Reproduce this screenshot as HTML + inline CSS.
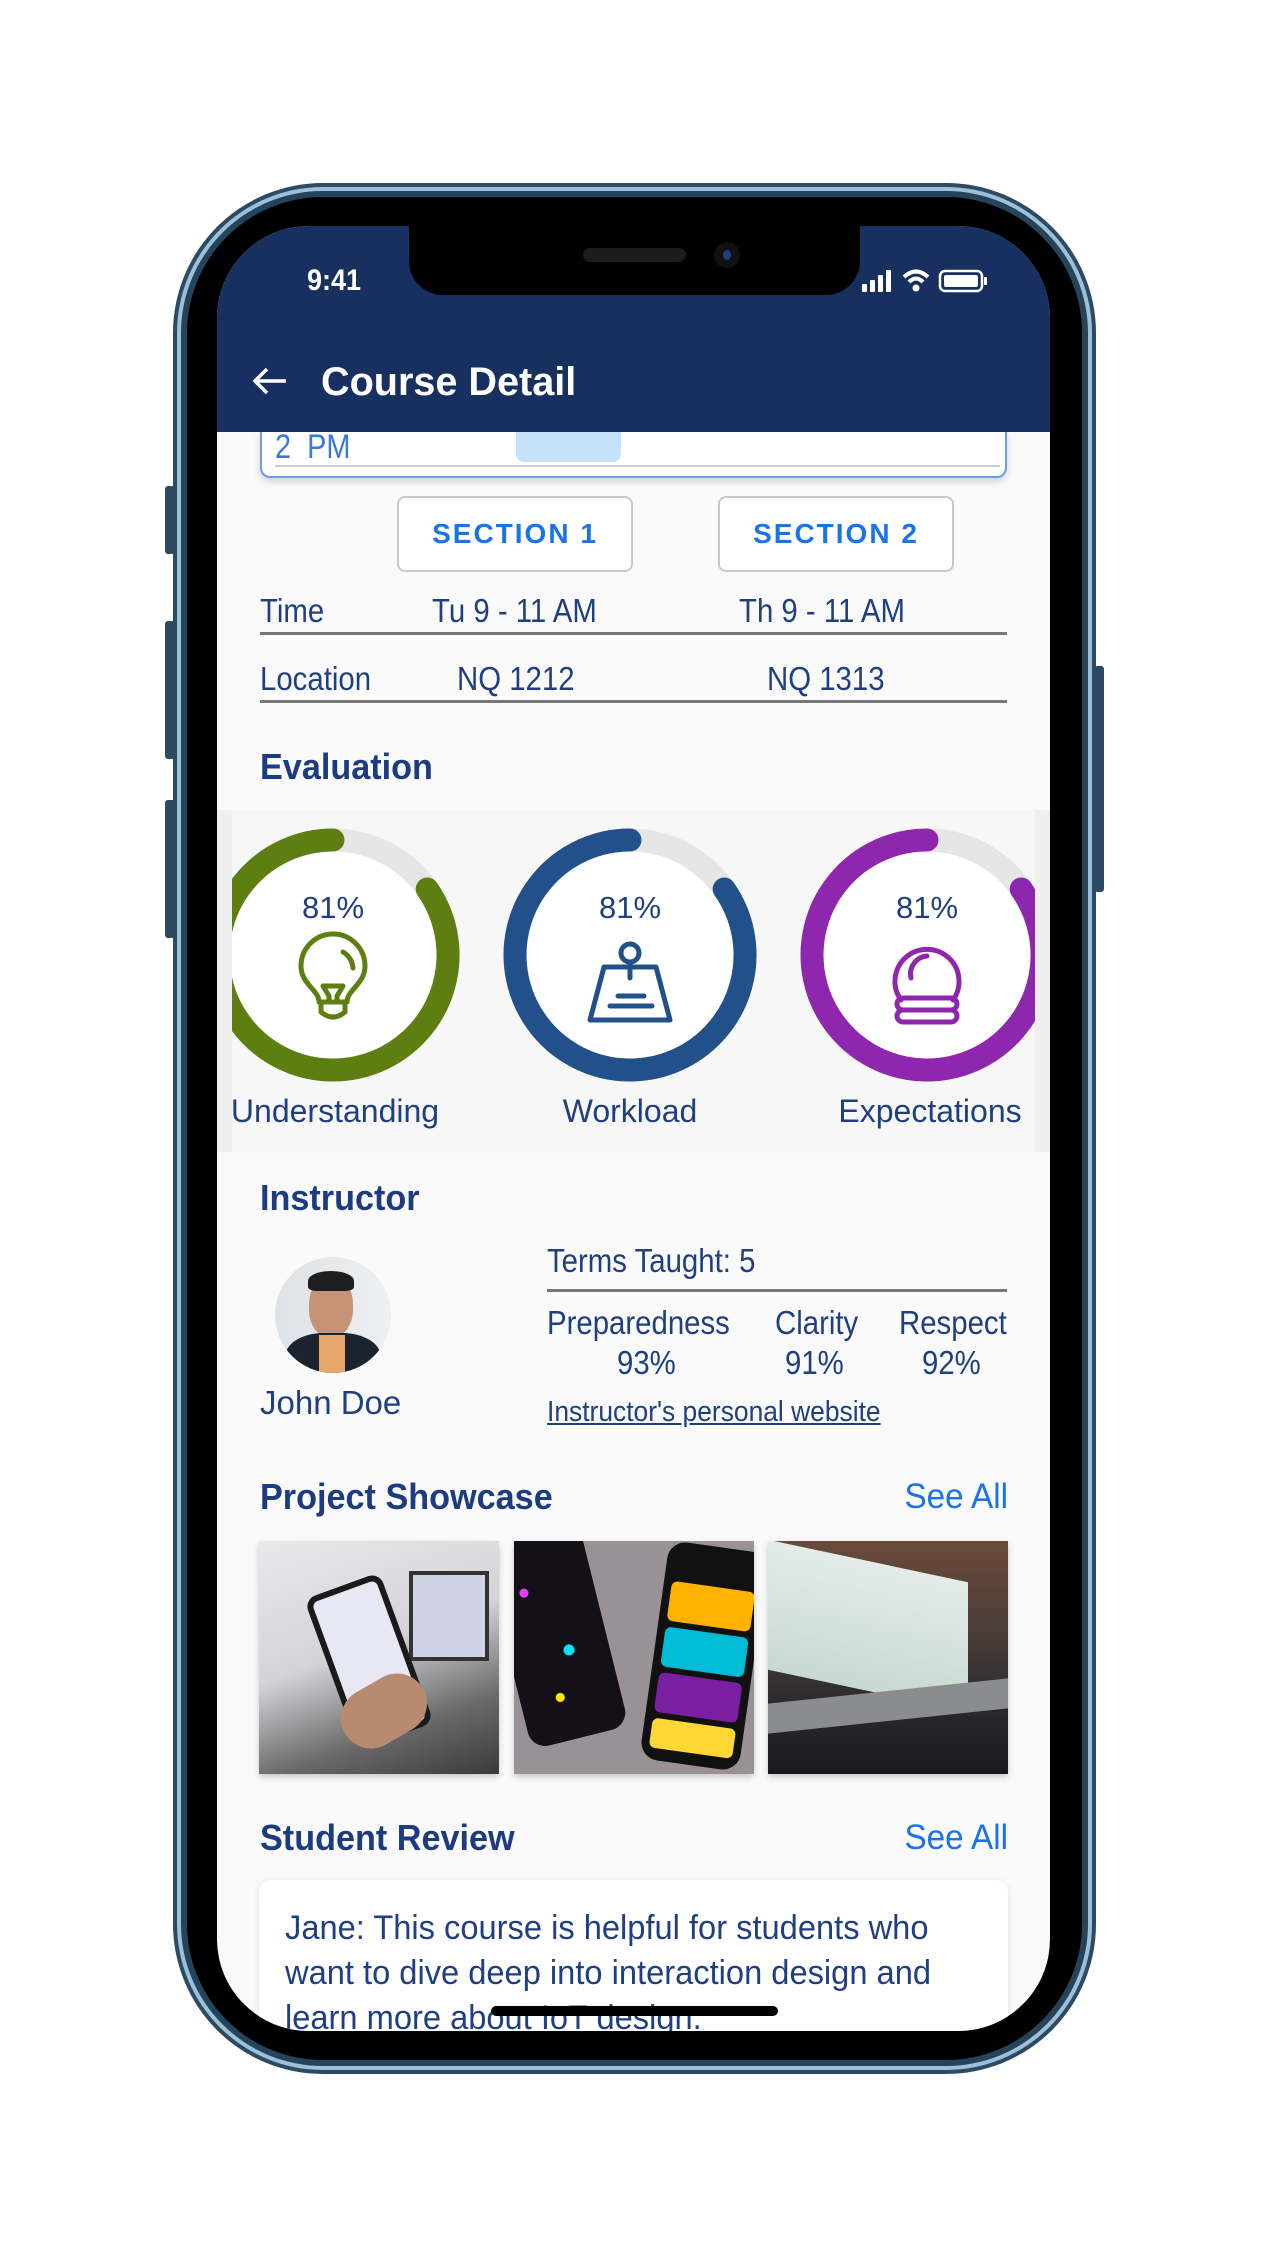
<!DOCTYPE html>
<html><head><meta charset="utf-8"><style>
*{margin:0;padding:0;box-sizing:border-box}
body{width:1266px;height:2250px;background:#fff;position:relative;overflow:hidden;font-family:"Liberation Sans",sans-serif}
.abs{position:absolute}
.n{color:#1f3f80;font-size:33px;white-space:nowrap;transform:scaleX(0.89);transform-origin:0 0;line-height:38px}
.h{font-weight:bold;color:#1c3b80;font-size:36px;white-space:nowrap;transform:scaleX(0.95);transform-origin:0 0;line-height:40px}
.see{color:#1a73e8;font-size:35px;white-space:nowrap;transform:scaleX(0.95);transform-origin:100% 0;line-height:40px;text-align:right}
.btn{border:2px solid #c8c8c8;border-radius:8px;background:#fff;color:#1a73e8;font-weight:bold;font-size:28px;letter-spacing:2px;text-align:center;line-height:72px}
</style></head><body>
<div class="abs" style="left:165px;top:486px;width:10px;height:68px;background:#2d4a63;border-radius:3px"></div>
<div class="abs" style="left:165px;top:621px;width:10px;height:138px;background:#2d4a63;border-radius:3px"></div>
<div class="abs" style="left:165px;top:800px;width:10px;height:138px;background:#2d4a63;border-radius:3px"></div>
<div class="abs" style="left:1094px;top:666px;width:10px;height:226px;background:#2d4a63;border-radius:3px"></div>
<div class="abs" style="left:173px;top:183px;width:923px;height:1891px;border-radius:150px;background:#2c4a63;"></div>
<div class="abs" style="left:177px;top:187px;width:915px;height:1883px;border-radius:146px;background:#9cc0d8;"></div>
<div class="abs" style="left:181px;top:191px;width:907px;height:1875px;border-radius:142px;background:#25445c;"></div>
<div class="abs" style="left:187px;top:197px;width:895px;height:1863px;border-radius:136px;background:#000;"></div>
<div class="abs" style="left:217px;top:226px;width:833px;height:1805px;border-radius:92px;overflow:hidden;background:#fafafa">
  <div class="abs" style="left:0;top:0;width:833px;height:206px;background:#17305f"></div>
  <div class="abs" style="left:192px;top:0;width:451px;height:69px;background:#000;border-radius:0 0 34px 34px"></div>
  <div class="abs" style="left:366px;top:22px;width:103px;height:14px;background:#1c1c1c;border-radius:7px"></div>
  <div class="abs" style="left:497px;top:16px;width:26px;height:26px;background:#111;border-radius:50%"><div style="margin:8px auto;width:8px;height:10px;border-radius:50%;background:#1f3f80"></div></div>
  <div class="abs" style="left:90px;top:38px;color:#fff;font-size:30px;font-weight:bold;transform:scaleX(0.9);transform-origin:0 0">9:41</div>
  <svg class="abs" style="left:645px;top:40px" width="150" height="30" viewBox="0 0 150 30">
    <rect x="0" y="18" width="5" height="8" rx="1" fill="#fff"/><rect x="8" y="14" width="5" height="12" rx="1" fill="#fff"/><rect x="16" y="9" width="5" height="17" rx="1" fill="#fff"/><rect x="24" y="4" width="5" height="22" rx="1" fill="#fff"/>
    <path d="M42 11 Q54 0 66 11" stroke="#fff" stroke-width="4" fill="none"/><path d="M47 16 Q54 9 61 16" stroke="#fff" stroke-width="4" fill="none"/><circle cx="54" cy="22" r="3.5" fill="#fff"/>
    <rect x="78" y="5" width="42" height="20" rx="5" fill="none" stroke="#fff" stroke-width="2.5"/><rect x="82" y="9" width="34" height="12" rx="2" fill="#fff"/><rect x="122" y="11" width="3" height="8" rx="1" fill="#fff"/>
  </svg>
  <div class="abs" style="left:35px;top:140px;"><svg width="36" height="30" viewBox="0 0 36 30"><path d="M34 15H4M15 3L3 15l12 12" stroke="#fff" stroke-width="3.5" fill="none"/></svg></div>
  <div class="abs" style="left:104px;top:134px;color:#fff;font-size:40px;font-weight:bold;transform:scaleX(0.99);transform-origin:0 0;white-space:nowrap">Course Detail</div>
  <div class="abs" style="left:43px;top:206px;width:747px;height:46px;border:2px solid #6a9cf0;border-top:none;border-radius:0 0 10px 10px;background:#fff;box-shadow:0 4px 8px rgba(0,0,0,.15);overflow:hidden">
    <div class="abs" style="left:254px;top:0;width:105px;height:30px;background:#c6e3fb;border-radius:0 0 8px 8px"></div>
    <div class="abs" style="left:13px;top:-4px;color:#3a78e0;font-size:34px;transform:scaleX(0.85);transform-origin:0 0">2&nbsp;&nbsp;PM</div>
    <div class="abs" style="left:13px;top:33px;width:725px;height:2px;background:#ccc"></div>
  </div>
  <div class="abs btn" style="left:180px;top:270px;width:236px;height:76px">SECTION 1</div>
  <div class="abs btn" style="left:501px;top:270px;width:236px;height:76px">SECTION 2</div>
  <div class="abs n" style="left:43px;top:366px">Time</div>
  <div class="abs n" style="left:215px;top:366px">Tu 9 - 11 AM</div>
  <div class="abs n" style="left:522px;top:366px">Th 9 - 11 AM</div>
  <div class="abs" style="left:43px;top:406px;width:747px;height:3px;background:#777"></div>
  <div class="abs n" style="left:43px;top:434px">Location</div>
  <div class="abs n" style="left:240px;top:434px">NQ 1212</div>
  <div class="abs n" style="left:550px;top:434px">NQ 1313</div>
  <div class="abs" style="left:43px;top:474px;width:747px;height:3px;background:#777"></div>
  <div class="abs h" style="left:43px;top:521px">Evaluation</div>
  <div class="abs" style="left:0;top:584px;width:833px;height:342px;background:#efefef"></div>
  <div class="abs" style="left:15px;top:584px;width:803px;height:342px;overflow:hidden;background:#f7f7f7">
    <svg class="abs" style="left:-15px;top:0" width="833" height="342" viewBox="0 0 833 342">
      <defs><filter id="sh" x="-30%" y="-30%" width="160%" height="160%"><feDropShadow dx="0" dy="4" stdDeviation="7" flood-color="#000" flood-opacity="0.18"/></filter></defs>
      <g stroke-linecap="round" fill="none" stroke-width="23">
        <circle cx="116" cy="145" r="104" fill="#fff" stroke="none" filter="url(#sh)"/>
        <circle cx="116" cy="145" r="115" stroke="#e6e6e6"/>
        <path d="M210.2 79 A115 115 0 1 1 116 30" stroke="#5d7e10"/>
        <circle cx="413" cy="145" r="104" fill="#fff" stroke="none" filter="url(#sh)"/>
        <circle cx="413" cy="145" r="115" stroke="#e6e6e6"/>
        <path d="M507.2 79 A115 115 0 1 1 413 30" stroke="#22508a"/>
        <circle cx="710" cy="145" r="104" fill="#fff" stroke="none" filter="url(#sh)"/>
        <circle cx="710" cy="145" r="115" stroke="#e6e6e6"/>
        <path d="M804.2 79 A115 115 0 1 1 710 30" stroke="#8e27ad"/>
      </g>
      <g transform="translate(74,130)" fill="none" stroke="#5d7e10" stroke-width="5" stroke-linecap="round" stroke-linejoin="round">
        <path d="M28 62 C28 50 10 44 10 26 A32 32 0 0 1 74 26 C74 44 56 50 56 62 Z"/>
        <path d="M52 12 A20 20 0 0 1 62 28"/>
        <path d="M32 46 H52 L46 56 V62 M38 62 V56 L32 46"/>
        <path d="M30 62 H54 V72 Q42 82 30 72 Z"/>
      </g>
      <g transform="translate(371,130)" fill="none" stroke="#22508a" stroke-width="5" stroke-linecap="round" stroke-linejoin="round">
        <circle cx="42" cy="13" r="9"/>
        <path d="M42 22 V38"/>
        <path d="M16 27 H68 L82 80 H2 Z"/>
        <path d="M30 56 H56 M22 66 H64"/>
      </g>
      <g transform="translate(668,132)" fill="none" stroke="#8e27ad" stroke-width="5" stroke-linecap="round" stroke-linejoin="round">
        <path d="M16 58 A32 32 0 1 1 68 58"/>
        <path d="M26 36 A18 18 0 0 1 42 14"/>
        <rect x="12" y="56" width="60" height="12" rx="6"/>
        <rect x="12" y="68" width="60" height="12" rx="6"/>
      </g>
      <text x="116" y="108" text-anchor="middle" font-family="Liberation Sans" font-size="31" fill="#1f3f80">81%</text>
      <text x="413" y="108" text-anchor="middle" font-family="Liberation Sans" font-size="31" fill="#1f3f80">81%</text>
      <text x="710" y="108" text-anchor="middle" font-family="Liberation Sans" font-size="31" fill="#1f3f80">81%</text>
      <text x="118" y="312" text-anchor="middle" font-family="Liberation Sans" font-size="32" fill="#1f3f80">Understanding</text>
      <text x="413" y="312" text-anchor="middle" font-family="Liberation Sans" font-size="32" fill="#1f3f80">Workload</text>
      <text x="713" y="312" text-anchor="middle" font-family="Liberation Sans" font-size="32" fill="#1f3f80">Expectations</text>
    </svg>
  </div>
  <div class="abs h" style="left:43px;top:952px">Instructor</div>
  <div class="abs" style="left:58px;top:1031px;width:116px;height:116px;border-radius:50%;overflow:hidden;background:linear-gradient(90deg,#dfe2e6,#eef0f2)">
    <div class="abs" style="left:34px;top:20px;width:44px;height:60px;border-radius:45%;background:#c69278"></div>
    <div class="abs" style="left:33px;top:14px;width:46px;height:20px;border-radius:50% 50% 20% 20%;background:#1e1e1e"></div>
    <div class="abs" style="left:10px;top:76px;width:96px;height:60px;border-radius:40% 40% 0 0;background:#1b2230"></div>
    <div class="abs" style="left:44px;top:78px;width:26px;height:40px;background:#e8a66c"></div>
  </div>
  <div class="abs" style="left:43px;top:1158px;color:#1f3f80;font-size:33px;white-space:nowrap">John Doe</div>
  <div class="abs n" style="left:330px;top:1016px">Terms Taught: 5</div>
  <div class="abs" style="left:330px;top:1063px;width:460px;height:3px;background:#777"></div>
  <div class="abs n" style="left:330px;top:1078px">Preparedness</div>
  <div class="abs n" style="left:558px;top:1078px">Clarity</div>
  <div class="abs n" style="left:682px;top:1078px">Respect</div>
  <div class="abs n" style="left:400px;top:1118px">93%</div>
  <div class="abs n" style="left:568px;top:1118px">91%</div>
  <div class="abs n" style="left:705px;top:1118px">92%</div>
  <div class="abs" style="left:330px;top:1170px;color:#1f3f80;font-size:29px;text-decoration:underline;transform:scaleX(0.91);transform-origin:0 0;white-space:nowrap">Instructor's personal website</div>
  <div class="abs h" style="left:43px;top:1251px">Project Showcase</div>
  <div class="abs see" style="right:42px;top:1251px">See All</div>
  <div class="abs" style="left:42px;top:1315px;width:240px;height:233px;box-shadow:0 3px 6px rgba(0,0,0,.2);overflow:hidden;background:linear-gradient(160deg,#e9e9ec 0%,#d4d4d8 45%,#6a6a6a 75%,#3a3a3a 100%)">
    <div class="abs" style="left:150px;top:30px;width:80px;height:90px;background:#cfd4e4;border:4px solid #333"></div>
    <div class="abs" style="left:70px;top:40px;width:80px;height:160px;border-radius:12px;background:#e8e8f4;border:6px solid #1a1a1a;transform:rotate(-20deg)"></div>
    <div class="abs" style="left:80px;top:140px;width:90px;height:60px;border-radius:30px;background:#b88a70;transform:rotate(-30deg)"></div>
  </div>
  <div class="abs" style="left:297px;top:1315px;width:240px;height:233px;box-shadow:0 3px 6px rgba(0,0,0,.2);overflow:hidden;background:#9a9196">
    <div class="abs" style="left:-10px;top:-20px;width:100px;height:220px;border-radius:18px;background:#141018;transform:rotate(-14deg);background-image:radial-gradient(circle at 30% 30%,#e040fb 0 4px,transparent 5px),radial-gradient(circle at 60% 60%,#00e5ff 0 5px,transparent 6px),radial-gradient(circle at 40% 80%,#ffea00 0 4px,transparent 5px)"></div>
    <div class="abs" style="left:140px;top:5px;width:100px;height:220px;border-radius:18px;background:#111;transform:rotate(8deg)">
      <div style="margin:40px 8px 0;height:40px;background:#ffb300;border-radius:6px"></div>
      <div style="margin:6px 8px 0;height:40px;background:#00bcd4;border-radius:6px"></div>
      <div style="margin:6px 8px 0;height:40px;background:#7b1fa2;border-radius:6px"></div>
      <div style="margin:6px 8px 0;height:30px;background:#fdd835;border-radius:6px"></div>
    </div>
  </div>
  <div class="abs" style="left:551px;top:1315px;width:240px;height:233px;box-shadow:0 3px 6px rgba(0,0,0,.2);overflow:hidden;background:linear-gradient(180deg,#6b4a3a 0%,#4a3d38 40%,#2a2a2e 70%,#1a1a1e 100%)">
    <div class="abs" style="left:0;top:20px;width:200px;height:130px;background:linear-gradient(180deg,#e4ece8,#c8d8d2);transform:skewY(12deg)"></div>
    <div class="abs" style="left:0;top:150px;width:240px;height:30px;background:#8a8c90;transform:skewY(-6deg)"></div>
  </div>
  <div class="abs h" style="left:43px;top:1592px">Student Review</div>
  <div class="abs see" style="right:42px;top:1592px">See All</div>
  <div class="abs" style="left:42px;top:1654px;width:749px;height:220px;background:#fff;border-radius:12px;box-shadow:0 2px 8px rgba(0,0,0,.1)">
    <div style="position:absolute;left:26px;top:26px;width:820px;color:#1f3f80;font-size:34px;line-height:45px;transform:scaleX(0.96);transform-origin:0 0;white-space:nowrap">Jane: This course is helpful for students who<br>want to dive deep into interaction design and<br>learn more about IoT design.</div>
  </div>
  <div class="abs" style="left:274px;top:1780px;width:287px;height:10px;border-radius:5px;background:#000"></div>
</div>
</body></html>
